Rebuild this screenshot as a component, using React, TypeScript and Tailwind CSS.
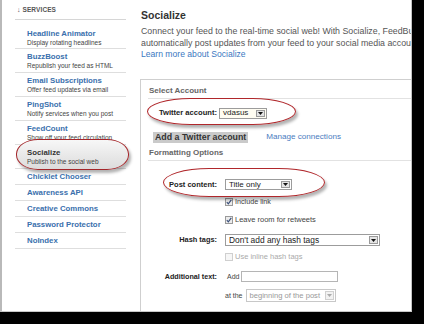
import React from "react";

const F = { fontFamily: '"Liberation Sans", Arial, sans-serif' };

function Arrow({ disabled }: { disabled?: boolean }) {
  return (
    <div
      className={`m-[1px] w-[9px] flex items-center justify-center border ${
        disabled ? "border-[#d0d0d0] bg-[#f2f2f2]" : "border-[#9a9a9a] bg-[#e4e4e4]"
      }`}
    >
      <svg width="5" height="3" viewBox="0 0 5 3">
        <path d="M0 0 L5 0 L2.5 3 Z" fill={disabled ? "#aaa" : "#111"} />
      </svg>
    </div>
  );
}

function Select({
  w,
  h,
  text,
  disabled,
  bg,
  size = "text-[8px]",
}: {
  w: string;
  h: string;
  text: string;
  disabled?: boolean;
  bg?: string;
  size?: string;
}) {
  return (
    <div
      className={`flex ${w} ${h} border ${
        disabled ? "border-[#c8c8c8] text-[#999]" : "border-[#9c9c9c] text-[#222]"
      } ${bg ?? "bg-white"}`}
    >
      <div className={`flex-1 flex items-center pl-[3px] ${size} leading-none whitespace-nowrap`}>
        {text}
      </div>
      <Arrow disabled={disabled} />
    </div>
  );
}

function Check({ checked, disabled }: { checked?: boolean; disabled?: boolean }) {
  return (
    <div
      className={`w-[8px] h-[8px] border ${
        disabled ? "border-[#cfcfcf] bg-[#f6f6f6]" : "border-[#9a9a9a] bg-[#ececec]"
      } flex items-center justify-center`}
    >
      {checked && (
        <svg width="6" height="6" viewBox="0 0 6 6">
          <path d="M0.8 3.2 L2.3 4.8 L5.3 0.8" stroke="#3a4f7a" strokeWidth="1.2" fill="none" />
        </svg>
      )}
    </div>
  );
}

const items: { t: string; s?: string; first?: boolean; active?: boolean }[] = [
  { t: "Headline Animator", s: "Display rotating headlines", first: true },
  { t: "BuzzBoost", s: "Republish your feed as HTML" },
  { t: "Email Subscriptions", s: "Offer feed updates via email" },
  { t: "PingShot", s: "Notify services when you post" },
  { t: "FeedCount", s: "Show off your feed circulation" },
  { t: "Socialize", s: "Publish to the social web", active: true },
  { t: "Chicklet Chooser" },
  { t: "Awareness API" },
  { t: "Creative Commons" },
  { t: "Password Protector" },
  { t: "NoIndex" },
];

function Sidebar() {
  return (
    <div className="w-[138px] shrink-0 pl-[13px] pr-[14px]">
      <div className="h-[20px] border-b border-[#d6d6d6] pt-[9px] pl-[2px] flex items-center gap-[2px] text-[#555]">
        <span className="text-[7px] leading-[8px] -mt-[8px]">↓</span>
        <span className="text-[6.5px] leading-[8px] font-bold -mt-[8px] tracking-[0.1px]">SERVICES</span>
      </div>
      {items.map((it) => (
        <div
          key={it.t}
          className={`relative border-b border-[#dedede] pl-[12px] ${
            it.first ? "pt-[9px] pb-[2px]" : it.s ? "pt-[3px] pb-[3px]" : "pt-[3px] pb-[2px]"
          }`}
        >
          {it.active && (
            <div className="absolute left-[1px] -right-[3px] -top-[6px] h-[31px] rounded-[22px/15px] border-[1.5px] border-[#a3262a] bg-[linear-gradient(#f7f7f7,#dcdcdc)] shadow-[2px_3px_3px_rgba(0,0,0,0.3)]" />
          )}
          <div
            className={`relative text-[7.8px] leading-[10px] font-bold whitespace-nowrap ${
              it.active ? "text-[#333]" : "text-[#3a70ad]"
            }`}
          >
            {it.t}
          </div>
          {it.s && (
            <div className="relative text-[6.5px] leading-[7px] text-[#444] whitespace-nowrap">{it.s}</div>
          )}
        </div>
      ))}
    </div>
  );
}

function Label({ children, size = "text-[7.4px]" }: { children: React.ReactNode; size?: string }) {
  return (
    <div className={`w-[76px] shrink-0 text-right font-bold ${size} leading-none text-[#222] whitespace-nowrap`}>
      {children}
    </div>
  );
}

function Main() {
  return (
    <div className="flex-1 min-w-0 flex flex-col overflow-hidden">
      <div className="pl-[1px] pt-[9px] text-[10.5px] leading-[12px] font-bold text-[#333]">Socialize</div>
      <div className="mt-[5px] pl-[1px] text-[8.8px] leading-[11.5px] text-[#555] whitespace-nowrap">
        <div>Connect your feed to the real-time social web! With Socialize, FeedBurner can</div>
        <div>automatically post updates from your feed to your social media accounts.</div>
        <div className="text-[#3b78bf] text-[8.6px]">Learn more about Socialize</div>
      </div>
      <div className="mt-[18.5px] flex-1 border-t border-l border-[#cfcfcf]">
        <div className="ml-[7px] pl-[1px] pt-[6px] pb-[2px] border-b border-[#e2e2e2] text-[8px] leading-[10px] font-bold text-[#666]">
          Select Account
        </div>
        <div className="mt-[8px] h-[12px] flex items-center">
          <Label size="text-[7.6px]">Twitter account:</Label>
          <div className="ml-[2px]">
            <Select w="w-[48px]" h="h-[11px]" text="vdasus" bg="bg-[#fffdf2]" />
          </div>
        </div>
        <div className="mt-[13px] h-[11px] flex items-center">
          <div className="ml-[12px] h-[11px] px-[2px] bg-[#cacaca] text-[8.8px] leading-[11px] font-bold text-[#333] whitespace-nowrap">
            Add a Twitter account
          </div>
          <div className="ml-[18px] text-[8.1px] leading-none text-[#4a7cc0] whitespace-nowrap">Manage connections</div>
        </div>
        <div className="mt-[5px] ml-[7px] pl-[1px] pb-[2px] border-b border-[#e2e2e2] text-[8px] leading-[10px] font-bold text-[#666]">
          Formatting Options
        </div>
        <div className="mt-[18px] h-[11px] flex items-center">
          <Label size="text-[7.5px]">Post content:</Label>
          <div className="ml-[8px]">
            <Select w="w-[67px]" h="h-[11px]" text="Title only" />
          </div>
        </div>
        <div className="mt-[7px] h-[10px] flex items-center pl-[84px] gap-[2px]">
          <Check checked />
          <span className="text-[7.2px] leading-none text-[#444]">Include link</span>
        </div>
        <div className="mt-[8px] h-[10px] flex items-center pl-[84px] gap-[2px]">
          <Check checked />
          <span className="text-[7.5px] leading-none text-[#444]">Leave room for retweets</span>
        </div>
        <div className="mt-[9px] h-[12px] flex items-center">
          <Label>Hash tags:</Label>
          <div className="ml-[8px]">
            <Select w="w-[155px]" h="h-[12px]" text="Don't add any hash tags" size="text-[8.4px]" />
          </div>
        </div>
        <div className="mt-[6px] h-[10px] flex items-center pl-[84px] gap-[2px]">
          <Check disabled />
          <span className="text-[7.5px] leading-none text-[#aaa]">Use inline hash tags</span>
        </div>
        <div className="mt-[9px] h-[11px] flex items-center">
          <Label size="text-[7.2px]">Additional text:</Label>
          <span className="ml-[10px] text-[7px] leading-none text-[#444]">Add</span>
          <div className="ml-[2px] w-[97px] h-[11px] border border-[#b5b5b5] bg-white" />
        </div>
        <div className="mt-[7px] h-[13px] flex items-center">
          <span className="ml-[84px] text-[7px] leading-none text-[#444] whitespace-nowrap">at the</span>
          <div className="ml-[3px]">
            <Select w="w-[90px]" h="h-[13px]" text="beginning of the post" disabled size="text-[7.6px]" />
          </div>
        </div>
      </div>
    </div>
  );
}

export default function App() {
  return (
    <div className="w-[424px] h-[324px] bg-black overflow-hidden" style={F}>
      <div className="relative w-[412px] h-[312px] bg-white border-l-2 border-l-[#b9b9b9] border-r border-r-[#c4c4c4] border-b border-b-[#c8c8c8] flex overflow-hidden">
        <Sidebar />
        <Main />
        {/* annotation ellipses */}
        <div className="absolute left-[145px] top-[98px] w-[149px] h-[27px] rounded-[45px/14px] border-[1.5px] border-[#b0272b] shadow-[2px_3px_3px_rgba(0,0,0,0.3)]" />
        <div className="absolute left-[161px] top-[168px] w-[162px] h-[29px] rounded-[48px/15px] border-[1.5px] border-[#b0272b] shadow-[2px_3px_3px_rgba(0,0,0,0.3)]" />
      </div>
    </div>
  );
}
